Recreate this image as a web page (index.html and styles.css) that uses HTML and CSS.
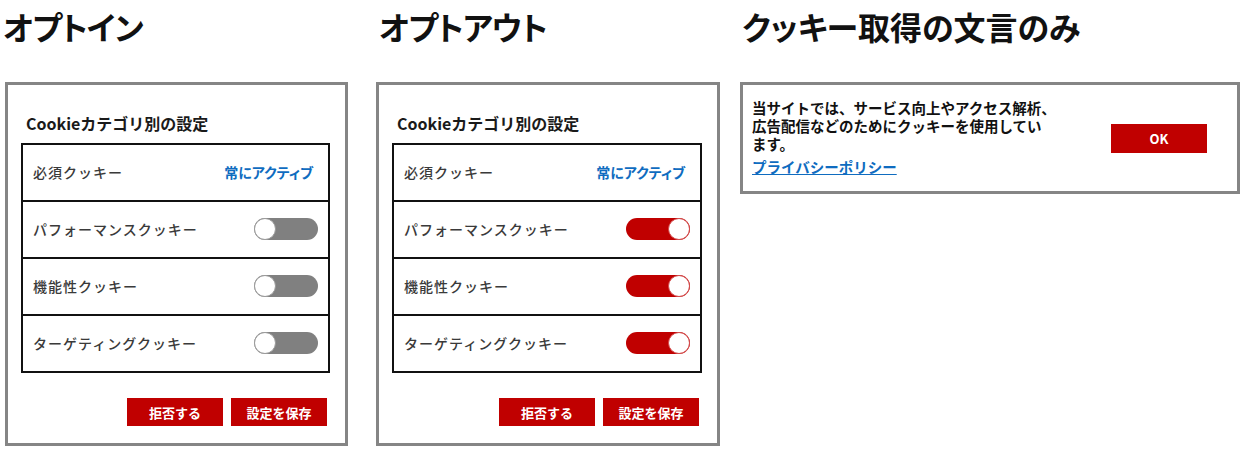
FILE: index.html
```html
<!DOCTYPE html>
<html lang="ja">
<head>
<meta charset="utf-8">
<title>Cookie同意パターン</title>
<link rel="stylesheet" href="styles.css">
</head>
<body>
<main class="page">
  <section class="col col-in">
    <h1 class="heading">オプトイン</h1>
    <div class="panel">
      <h2 class="panel-title">Cookieカテゴリ別の設定</h2>
      <div class="cat-table">
        <div class="cat-row"><span class="cat-name">必須クッキー</span><span class="always">常にアクティブ</span></div>
        <div class="cat-row"><span class="cat-name">パフォーマンスクッキー</span><span class="toggle"><span class="knob"></span></span></div>
        <div class="cat-row"><span class="cat-name">機能性クッキー</span><span class="toggle"><span class="knob"></span></span></div>
        <div class="cat-row"><span class="cat-name">ターゲティングクッキー</span><span class="toggle"><span class="knob"></span></span></div>
      </div>
      <div class="actions">
        <button class="btn">拒否する</button>
        <button class="btn">設定を保存</button>
      </div>
    </div>
  </section>
  <section class="col col-out">
    <h1 class="heading">オプトアウト</h1>
    <div class="panel">
      <h2 class="panel-title">Cookieカテゴリ別の設定</h2>
      <div class="cat-table">
        <div class="cat-row"><span class="cat-name">必須クッキー</span><span class="always">常にアクティブ</span></div>
        <div class="cat-row"><span class="cat-name">パフォーマンスクッキー</span><span class="toggle on"><span class="knob"></span></span></div>
        <div class="cat-row"><span class="cat-name">機能性クッキー</span><span class="toggle on"><span class="knob"></span></span></div>
        <div class="cat-row"><span class="cat-name">ターゲティングクッキー</span><span class="toggle on"><span class="knob"></span></span></div>
      </div>
      <div class="actions">
        <button class="btn">拒否する</button>
        <button class="btn">設定を保存</button>
      </div>
    </div>
  </section>
  <section class="col col-notice">
    <h1 class="heading">クッキー取得の文言のみ</h1>
    <div class="panel notice">
      <div class="notice-body">
        <p class="notice-text">当サイトでは、サービス向上やアクセス解析、<br>広告配信などのためにクッキーを使用してい<br>ます。</p>
        <a class="policy" href="#">プライバシーポリシー</a>
      </div>
      <button class="btn ok">OK</button>
    </div>
  </section>
</main>
</body>
</html>
```

FILE: styles.css
```css
* { box-sizing: border-box; }

body {
  margin: 0;
  background: #fff;
  font-family: "Noto Sans CJK JP", "Noto Sans", sans-serif;
  color: #111;
}

.page {
  display: flex;
  align-items: flex-start;
  padding-left: 5px;
}

.col-in { width: 343px; }
.col-out { width: 344px; margin-left: 28px; }
.col-notice { width: 500px; margin-left: 20px; }

.heading {
  margin: 0;
  height: 82px;
  padding-top: 4px;
  font-size: 32px;
  line-height: 44px;
  font-weight: 700;
  font-feature-settings: "palt";
  letter-spacing: -1px;
  color: #111;
}
.col-in .heading { margin-left: -2px; }
.col-out .heading { margin-left: 3px; }
.col-notice .heading { margin-left: 2px; letter-spacing: 0; }

.panel {
  border: 3px solid #858585;
  padding: 25px 15px 17px 13px;
}

.panel-title {
  margin: 0 0 7px 5px;
  font-size: 16px;
  line-height: 26px;
  font-weight: 700;
  letter-spacing: 0;
  color: #1a1a1a;
}

.cat-table {
  border: 2px solid #111;
  border-bottom: none;
}

.cat-row {
  height: 57px;
  border-bottom: 2px solid #111;
  display: flex;
  align-items: center;
  justify-content: space-between;
  padding: 0 10px 2px 10px;
}

.cat-name {
  font-size: 14px;
  font-weight: 500;
  letter-spacing: 1px;
  color: #3a3a3a;
}

.always {
  font-size: 14px;
  font-weight: 700;
  font-feature-settings: "palt";
  color: #0f6cc0;
  margin-right: 5px;
}

.toggle {
  width: 64px;
  height: 22px;
  border-radius: 11px;
  background: #808080;
  display: flex;
  align-items: center;
  justify-content: flex-start;
}
.knob {
  width: 22px;
  height: 22px;
  border-radius: 50%;
  background: #fff;
  border: 1px solid #9a9a9a;
}
.toggle.on {
  background: #c00000;
  justify-content: flex-end;
}
.toggle.on .knob { border-color: #d34a4a; }

.actions {
  display: flex;
  justify-content: flex-end;
  gap: 8px;
  margin-top: 25px;
  padding-right: 3px;
}

.btn {
  width: 96px;
  height: 28px;
  border: none;
  background: #c00000;
  color: #fff;
  font-family: "Noto Sans CJK JP", "Noto Sans", sans-serif;
  font-size: 13px;
  font-weight: 700;
  padding: 0;
  cursor: pointer;
}

.notice {
  display: flex;
  align-items: center;
  justify-content: space-between;
  padding: 14px 30px 13px 9px;
}

.notice-text {
  margin: 0;
  font-size: 14.5px;
  line-height: 18px;
  font-weight: 700;
  color: #111;
}

.policy {
  display: inline-block;
  margin-top: 4px;
  font-size: 14.5px;
  line-height: 20px;
  font-weight: 700;
  color: #0f6cc0;
  text-decoration: underline;
}

.btn.ok {
  height: 29px;
  margin-top: 0;
}
```
